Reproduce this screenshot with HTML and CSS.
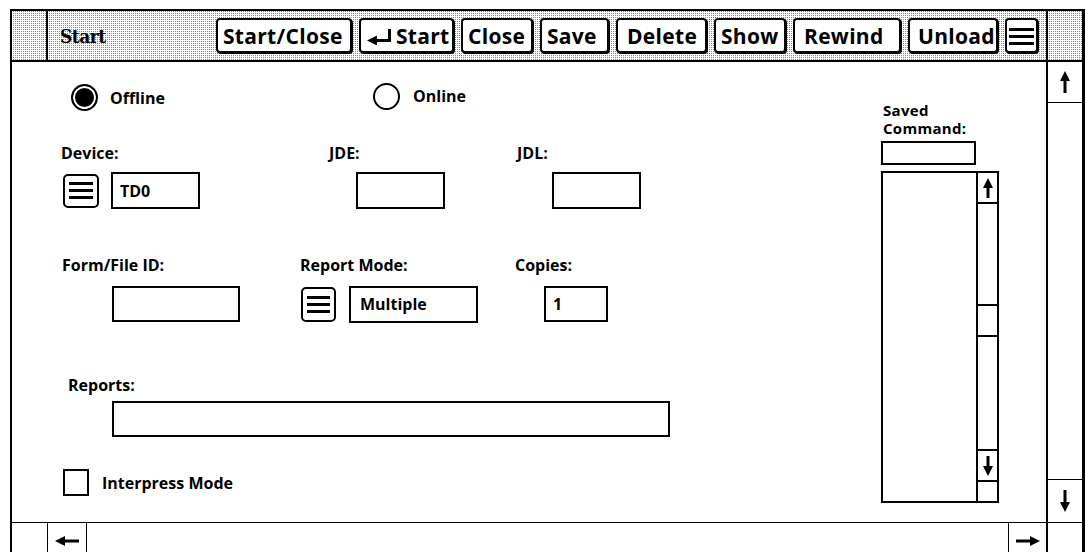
FILE: index.html
```html
<!DOCTYPE html>
<html lang="en">
<head>
    <meta charset="UTF-8">
    <meta name="viewport" content="width=device-width, initial-scale=1.0">
    <title>Start</title>
    <link rel="stylesheet" href="styles.css">
</head>
<body>
    <div class="window">
        <div class="titlebar">
            <div class="tb-corner"></div>
            <div class="tb-main">
                <span class="tb-title">Start</span>
                <div class="tb-buttons">
                    <div class="cmd w-startclose">Start/Close</div>
                    <div class="cmd w-start">
                        <svg class="ret" width="26" height="16" viewBox="0 0 26 16"><rect x="21" y="0" width="3" height="13"/><rect x="8" y="10" width="16" height="3"/><polygon points="0,11.5 10,6.5 10,16.5"/></svg>Start
                    </div>
                    <div class="cmd w-close">Close</div>
                    <div class="cmd w-save">Save</div>
                    <div class="cmd w-delete">Delete</div>
                    <div class="cmd w-show">Show</div>
                    <div class="cmd w-rewind">Rewind</div>
                    <div class="cmd w-unload">Unload</div>
                    <div class="cmd cmd-menu">
                        <svg width="25" height="20" viewBox="0 0 25 20"><rect x="0" y="2" width="25" height="3"/><rect x="0" y="9" width="25" height="3"/><rect x="0" y="16" width="25" height="3"/></svg>
                    </div>
                </div>
            </div>
            <div class="tb-corner tb-right"></div>
        </div>

        <div class="content">
            <div class="form">
                <div class="fields">
                    <div class="radios">
                        <div class="radio radio-first"><span class="dot on"></span>Offline</div>
                        <div class="radio"><span class="dot"></span>Online</div>
                    </div>

                    <div class="row row-one">
                        <div class="field f-device">
                            <div class="label">Device:</div>
                            <div class="ctl">
                                <svg class="menu" width="36" height="34" viewBox="0 0 36 34"><rect x="1" y="1" width="34" height="32" rx="4" fill="#fff" stroke="#000" stroke-width="2"/><rect x="6" y="8" width="24" height="3"/><rect x="6" y="15" width="24" height="3"/><rect x="6" y="22" width="24" height="3"/></svg>
                                <div class="box b-device">TD0</div>
                            </div>
                        </div>
                        <div class="field f-jde">
                            <div class="label">JDE:</div>
                            <div class="ctl"><div class="box b-small"></div></div>
                        </div>
                        <div class="field f-jdl">
                            <div class="label">JDL:</div>
                            <div class="ctl"><div class="box b-small"></div></div>
                        </div>
                    </div>

                    <div class="row row-two">
                        <div class="field f-form">
                            <div class="label">Form/File ID:</div>
                            <div class="ctl"><div class="box b-form"></div></div>
                        </div>
                        <div class="field f-mode">
                            <div class="label">Report Mode:</div>
                            <div class="ctl">
                                <svg class="menu" width="35" height="35" viewBox="0 0 35 35"><rect x="1" y="1" width="33" height="33" rx="4" fill="#fff" stroke="#000" stroke-width="2"/><rect x="6" y="9" width="23" height="3"/><rect x="6" y="16" width="23" height="3"/><rect x="6" y="23" width="23" height="3"/></svg>
                                <div class="box b-mode">Multiple</div>
                            </div>
                        </div>
                        <div class="field f-copies">
                            <div class="label">Copies:</div>
                            <div class="ctl"><div class="box b-copies">1</div></div>
                        </div>
                    </div>

                    <div class="reports">
                        <div class="label">Reports:</div>
                        <div class="box b-reports"></div>
                    </div>

                    <div class="check">
                        <span class="checkbox"></span>Interpress Mode
                    </div>
                </div>

                <div class="saved">
                    <div class="label saved-label">Saved<br>Command:</div>
                    <div class="box b-saved"></div>
                    <div class="list">
                        <div class="list-body"></div>
                        <div class="list-scroll">
                            <div class="ls-cell ls-arrow">
                                <svg width="10" height="20" viewBox="0 0 10 20"><polygon points="5,0 10,10 6.5,10 6.5,20 3.5,20 3.5,10 0,10"/></svg>
                            </div>
                            <div class="ls-cell ls-track1"></div>
                            <div class="ls-cell ls-thumb"></div>
                            <div class="ls-cell ls-track2"></div>
                            <div class="ls-cell ls-arrow">
                                <svg width="10" height="20" viewBox="0 0 10 20"><polygon points="5,20 10,10 6.5,10 6.5,0 3.5,0 3.5,10 0,10"/></svg>
                            </div>
                            <div class="ls-end"></div>
                        </div>
                    </div>
                </div>
            </div>

            <div class="vscroll">
                <div class="vs-up">
                    <svg width="10" height="22" viewBox="0 0 10 22"><polygon points="5,0 10,10 6.5,10 6.5,22 3.5,22 3.5,10 0,10"/></svg>
                </div>
                <div class="vs-track"></div>
                <div class="vs-down">
                    <svg width="10" height="22" viewBox="0 0 10 22"><polygon points="5,22 10,12 6.5,12 6.5,0 3.5,0 3.5,12 0,12"/></svg>
                </div>
            </div>
        </div>

        <div class="hscroll">
            <div class="hs-corner"></div>
            <div class="hs-left">
                <svg width="24" height="10" viewBox="0 0 24 10"><polygon points="0,5 10,0 10,3.5 24,3.5 24,6.5 10,6.5 10,10"/></svg>
            </div>
            <div class="hs-track"></div>
            <div class="hs-right">
                <svg width="24" height="10" viewBox="0 0 24 10"><polygon points="24,5 14,0 14,3.5 0,3.5 0,6.5 14,6.5 14,10"/></svg>
            </div>
            <div class="hs-end"></div>
        </div>
    </div>
</body>
</html>
```

FILE: styles.css
```css
body {
    margin: 0;
    background-color: #fff;
    color: #000;
    font-family: "Open Sans", sans-serif;
    font-weight: 700;
    overflow: hidden;
}
svg {
    display: block;
    fill: #000;
}

/* window frame */
.window {
    margin: 9px 0 0 10px;
    width: 1075px;
    box-sizing: border-box;
    border-top: 2px solid #000;
    border-left: 2px solid #000;
    border-right: 3px solid #000;
}

/* title bar with the grey stipple */
.titlebar {
    display: flex;
    height: 51px;
    box-sizing: border-box;
    border-bottom: 2px solid #000;
    background: #fff repeating-conic-gradient(#8a8a8a 0 25%, #fff 0 100%) 0 0 / 2px 2px;
}
.tb-corner {
    width: 34px;
    border-right: 2px solid #000;
}
.tb-right {
    border-right: none;
    border-left: 2px solid #000;
}
.tb-main {
    flex: 1;
    display: flex;
    align-items: center;
    padding: 0 8px 0 12px;
}
.tb-title {
    font-family: "DejaVu Serif Condensed", "DejaVu Serif", serif;
    font-size: 19px;
    font-weight: 700;
    letter-spacing: -0.5px;
    color: #000;
}
.tb-buttons {
    margin-left: auto;
    display: flex;
    gap: 7px;
}
.cmd {
    height: 35px;
    box-sizing: border-box;
    display: flex;
    align-items: center;
    padding-left: 5px;
    background: #fff;
    border: 2px solid #000;
    border-radius: 4px;
    box-shadow: 1px 1px 0 #000;
    font-size: 21px;
    letter-spacing: 0.3px;
    white-space: nowrap;
}
.cmd .ret { margin: 2px 3px 0 1px; }
.w-startclose { width: 136px; }
.w-start { width: 95px; }
.w-close { width: 72px; }
.w-save { width: 69px; }
.w-delete { width: 91px; padding-left: 9px; }
.w-show { width: 72px; }
.w-rewind { width: 108px; padding-left: 9px; }
.w-unload { width: 90px; padding-left: 8px; }
.cmd-menu {
    width: 33px;
    padding-left: 2px;
}

/* main area */
.content {
    display: flex;
    height: 460px;
}
.form {
    flex: 1;
    display: flex;
}
.fields {
    width: 869px;
}
.label {
    font-size: 16px;
    line-height: 20px;
}
.box {
    box-sizing: border-box;
    border: 2px solid #000;
    background: #fff;
    font-size: 16px;
    display: flex;
    align-items: center;
    padding-left: 7px;
}

.radios {
    display: flex;
    align-items: center;
    height: 27px;
    margin-top: 22px;
    padding-left: 59px;
    font-size: 16px;
}
.radio {
    display: flex;
    align-items: center;
    gap: 12px;
}
.radio-first {
    width: 302px;
}
.radio + .radio {
    margin-top: -3px;
    gap: 13px;
}
.dot {
    width: 27px;
    height: 27px;
    box-sizing: border-box;
    border: 2px solid #000;
    border-radius: 50%;
}
.dot.on {
    background: #000;
    box-shadow: inset 0 0 0 2px #fff;
}

.row {
    display: flex;
}
.row .ctl {
    display: flex;
    align-items: center;
}
.row-one {
    margin-top: 32px;
    padding-left: 49px;
}
.row-one .ctl { margin-top: 9px; height: 37px; }
.f-device { width: 268px; }
.f-device .ctl { padding-left: 2px; gap: 12px; }
.f-jde { width: 188px; }
.f-jde .ctl { padding-left: 27px; }
.f-jdl .ctl { padding-left: 35px; }
.b-device { width: 89px; height: 37px; }
.b-small { width: 89px; height: 37px; }

.row-two {
    margin-top: 46px;
    padding-left: 50px;
}
.row-two .ctl { margin-top: 11px; height: 36px; }
.f-form { width: 238px; }
.f-form .ctl { padding-left: 50px; }
.b-form { width: 128px; height: 36px; }
.f-mode { width: 215px; }
.f-mode .ctl { padding-left: 1px; gap: 13px; }
.b-mode { width: 129px; height: 37px; padding-left: 9px; }
.f-copies .ctl { padding-left: 29px; }
.b-copies { width: 64px; height: 36px; }

.reports {
    margin-top: 53px;
    padding-left: 56px;
}
.b-reports {
    margin: 6px 0 0 44px;
    width: 558px;
    height: 36px;
}

.check {
    display: flex;
    align-items: center;
    gap: 13px;
    margin-top: 32px;
    padding-left: 51px;
    font-size: 16px;
}
.checkbox {
    width: 26px;
    height: 27px;
    box-sizing: border-box;
    border: 2px solid #000;
}

/* saved command column */
.saved {
    padding-top: 39px;
}
.saved-label {
    font-size: 15px;
    line-height: 18px;
    letter-spacing: 0.3px;
    padding-left: 2px;
}
.b-saved {
    margin-top: 4px;
    width: 95px;
    height: 24px;
}
.list {
    margin-top: 6px;
    width: 118px;
    height: 332px;
    box-sizing: border-box;
    border: 2px solid #000;
    display: flex;
}
.list-body {
    flex: 1;
}
.list-scroll {
    width: 19px;
    border-left: 2px solid #000;
    display: flex;
    flex-direction: column;
}
.ls-cell {
    border-bottom: 2px solid #000;
}
.ls-arrow {
    height: 29px;
    display: flex;
    align-items: center;
    justify-content: center;
}
.ls-track1 { height: 100px; }
.ls-thumb { height: 29px; }
.ls-track2 { flex: 1; }
.ls-end { height: 19px; }

/* right scrollbar */
.vscroll {
    width: 34px;
    border-left: 2px solid #000;
    display: flex;
    flex-direction: column;
}
.vs-up, .vs-down {
    display: flex;
    align-items: center;
    justify-content: center;
}
.vs-up {
    height: 40px;
    border-bottom: 1px solid #000;
}
.vs-track { flex: 1; }
.vs-down {
    height: 42px;
    border-top: 1px solid #000;
}

/* bottom scrollbar */
.hscroll {
    display: flex;
    height: 40px;
    border-top: 1px solid #000;
}
.hs-corner {
    width: 35px;
    border-right: 1px solid #000;
}
.hs-left, .hs-right {
    width: 38px;
    display: flex;
    justify-content: center;
    padding-top: 13px;
}
.hs-left { border-right: 1px solid #000; }
.hs-track { flex: 1; }
.hs-right {
    width: 37px;
    border-left: 1px solid #000;
    border-right: 2px solid #000;
}
.hs-end { width: 34px; }
```
